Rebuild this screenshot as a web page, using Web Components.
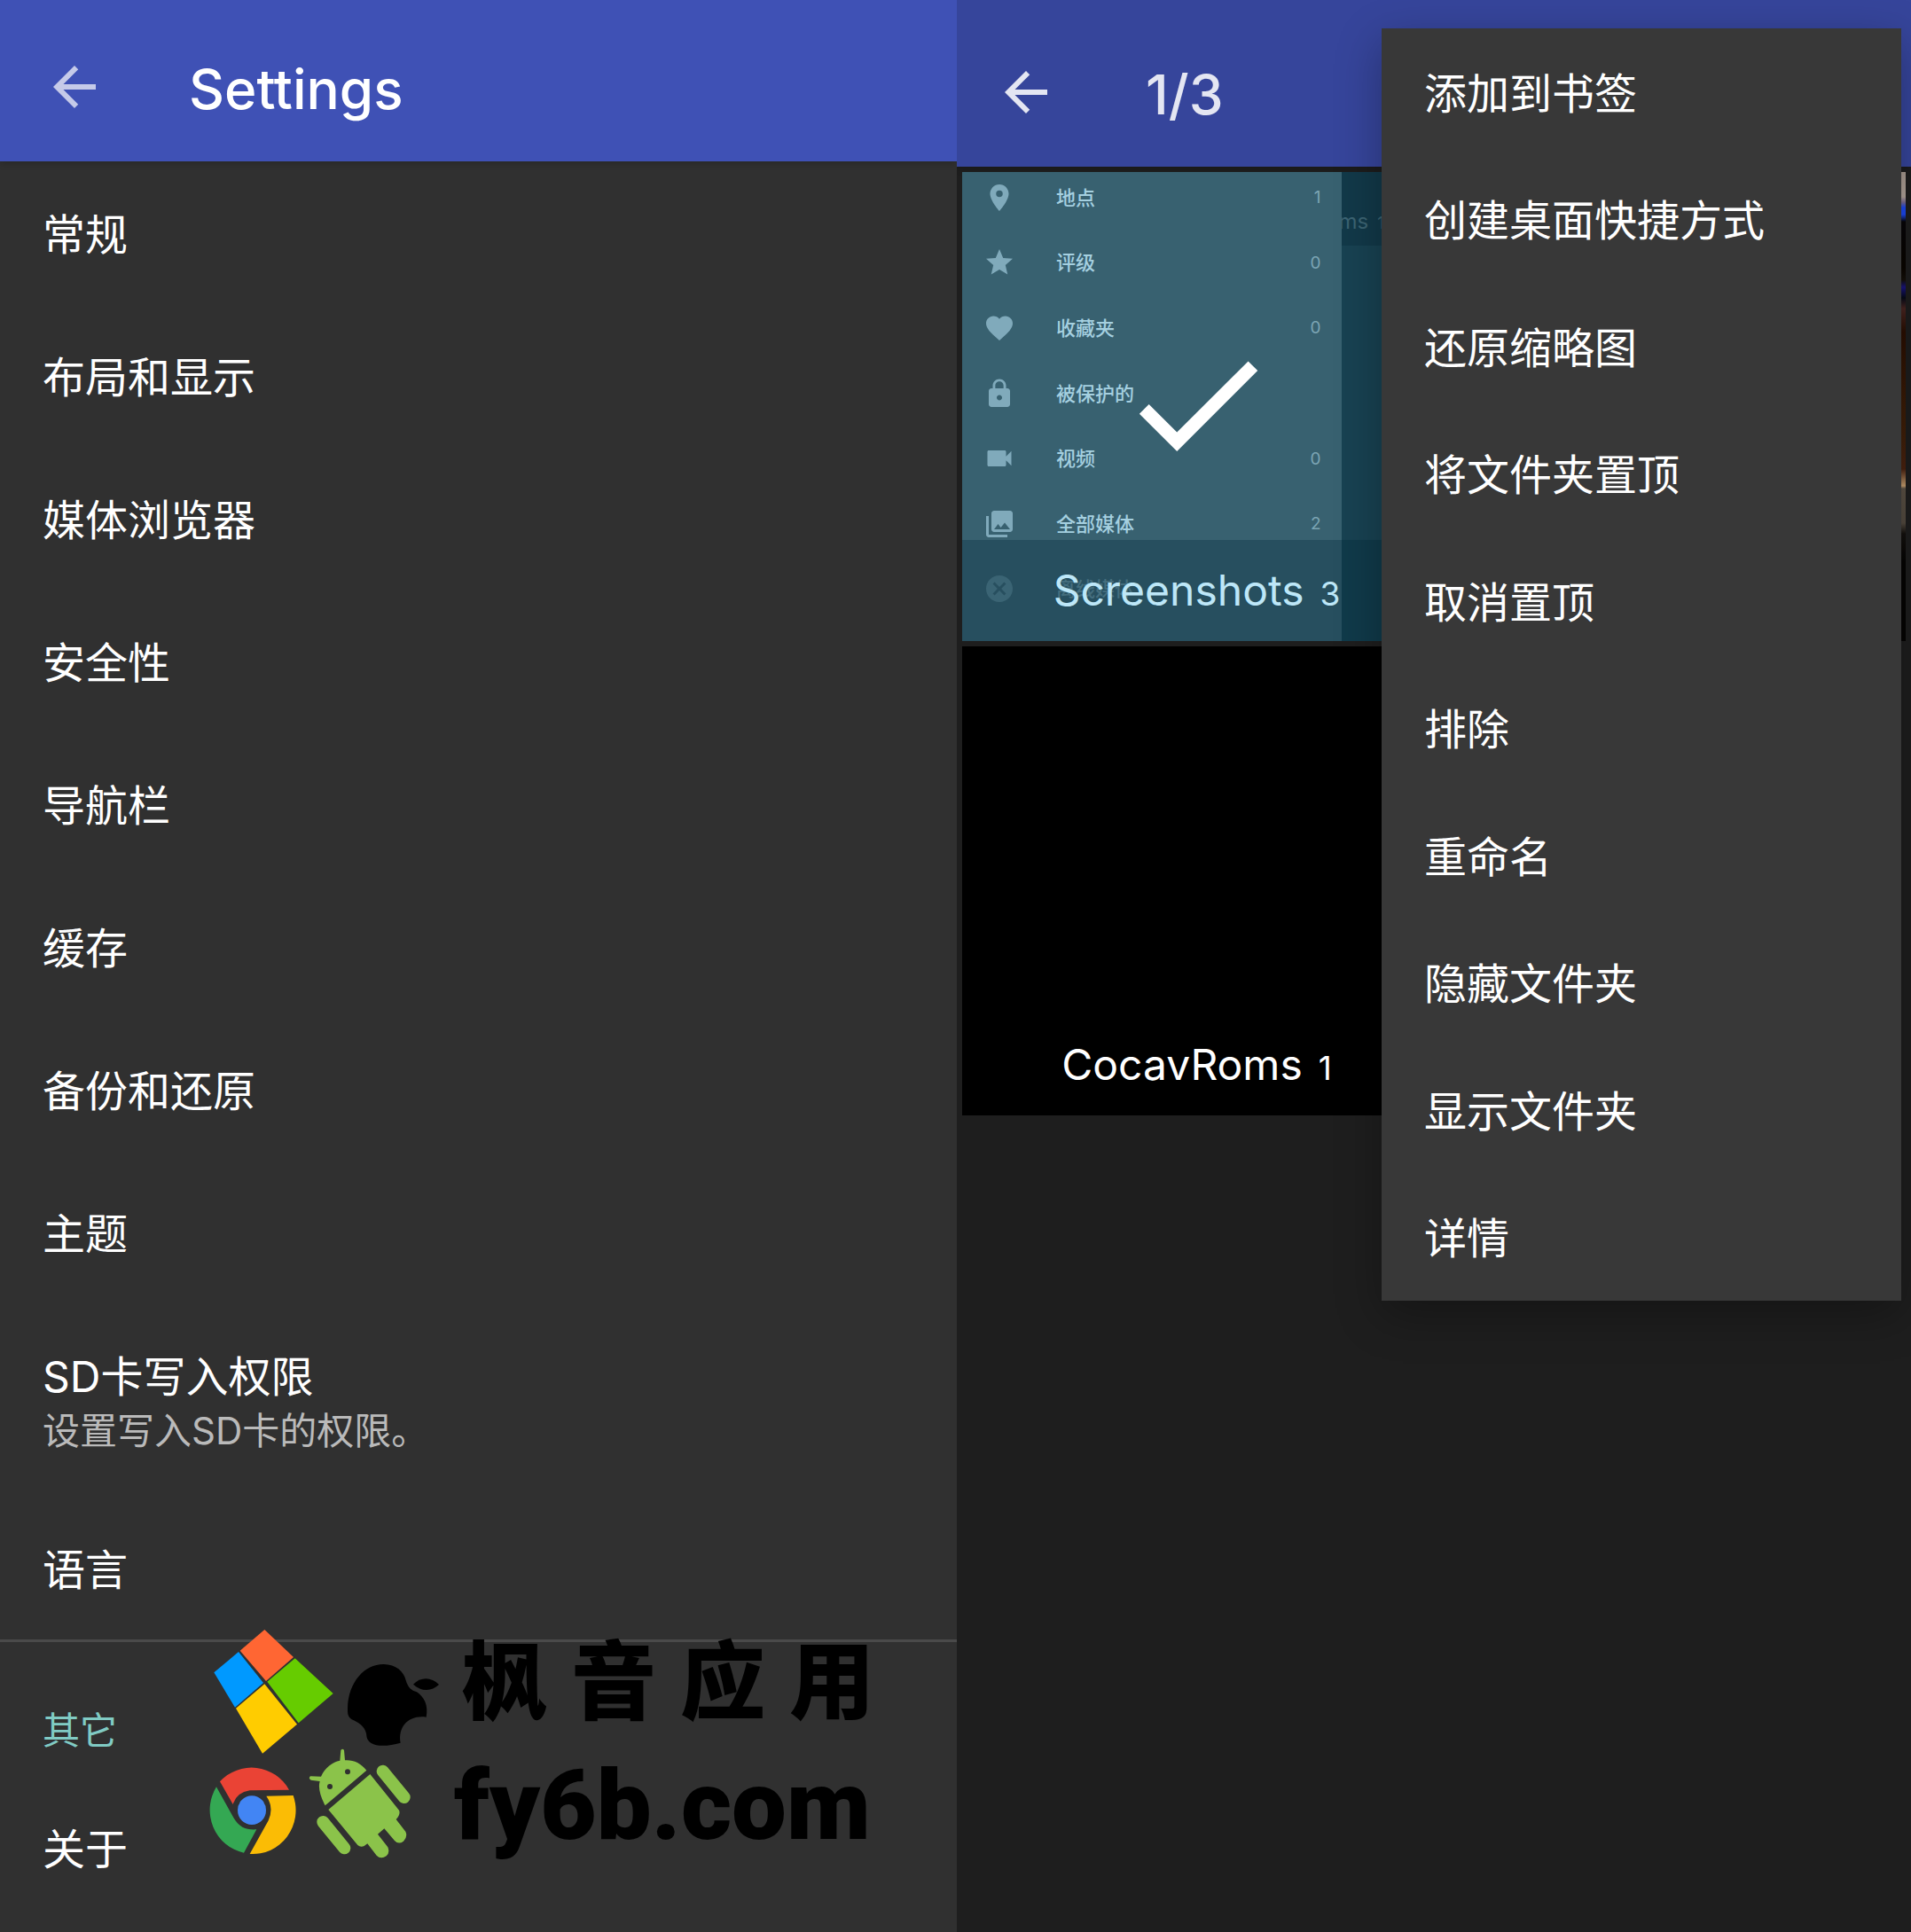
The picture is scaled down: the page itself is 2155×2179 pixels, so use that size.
<!DOCTYPE html>
<html lang="zh-CN">
<head>
<meta charset="utf-8">
<title>Settings</title>
<style>
    html, body {
        margin: 0;
        min-height: 100%;
    }
    body {
        display: flex;
        min-height: 100vh;
        background: #1e1e1e;
        color: #fff;
        font-family: Inter, "Noto Sans CJK SC", sans-serif;
        font-size: 48px;
    }
    settings-screen { flex: 1079 1 0; }
    gallery-screen { flex: 1076 1 0; }
</style>
</head>
<body>
<settings-screen>
    <app-bar slot="bar" label="Settings"></app-bar>
    <setting-row>常规</setting-row>
    <setting-row>布局和显示</setting-row>
    <setting-row>媒体浏览器</setting-row>
    <setting-row>安全性</setting-row>
    <setting-row>导航栏</setting-row>
    <setting-row>缓存</setting-row>
    <setting-row>备份和还原</setting-row>
    <setting-row>主题</setting-row>
    <setting-row>SD卡写入权限<span slot="summary">设置写入SD卡的权限。</span></setting-row>
    <setting-row>语言</setting-row>
    <setting-category>其它</setting-category>
    <setting-row>关于</setting-row>
    <brand-mark slot="mark"></brand-mark>
</settings-screen>

<gallery-screen>
    <app-bar slot="bar" class="selection" label="1/3"></app-bar>
    <folder-tile class="selected" name="Screenshots" count="3">
        <drawer-thumb></drawer-thumb>
    </folder-tile>
    <folder-tile class="photo"></folder-tile>
    <folder-tile name="CocavRoms" count="1"></folder-tile>
    <popup-menu slot="menu">
        <menu-entry>添加到书签</menu-entry>
        <menu-entry>创建桌面快捷方式</menu-entry>
        <menu-entry>还原缩略图</menu-entry>
        <menu-entry>将文件夹置顶</menu-entry>
        <menu-entry>取消置顶</menu-entry>
        <menu-entry>排除</menu-entry>
        <menu-entry>重命名</menu-entry>
        <menu-entry>隐藏文件夹</menu-entry>
        <menu-entry>显示文件夹</menu-entry>
        <menu-entry>详情</menu-entry>
    </popup-menu>
</gallery-screen>

<script>
// Small base: renders the markup once into an open shadow root
class BaseElement extends HTMLElement {
    constructor() {
        super();
        this.attachShadow({ mode: 'open' });
    }

    connectedCallback() {
        this.shadowRoot.innerHTML = this.template();
    }
}

class SettingsScreen extends BaseElement {
    template() {
        return `
            <style>
                :host {
                    display: block;
                    position: relative;
                    min-width: 0;
                    background: #303030;
                }
            </style>
            <slot name="bar"></slot>
            <main><slot></slot></main>
            <slot name="mark"></slot>
        `;
    }
}

class AppBar extends BaseElement {
    template() {
        return `
            <style>
                :host {
                    display: flex;
                    align-items: center;
                    gap: 93px;
                    box-sizing: border-box;
                    height: 182px;
                    padding: 14px 48px 0;
                    background: #3f51b5;
                    box-shadow: 0 2px 8px rgba(0, 0, 0, 0.2);
                }
                :host(.selection) {
                    height: 188px;
                    gap: 99px;
                    padding: 20px 42px 0;
                    background: #36459b;
                    color: #e4e6f2;
                }
                button {
                    display: flex;
                    padding: 0;
                    border: none;
                    background: none;
                    color: #c5cae9;
                    cursor: pointer;
                }
                :host(.selection) button { color: inherit; }
                svg {
                    width: 72px;
                    height: 72px;
                    fill: currentColor;
                }
                h1 {
                    margin: 0;
                    padding-top: 6px;
                    font-size: 62px;
                    font-weight: 500;
                    line-height: 72px;
                }
            </style>
            <button type="button" aria-label="Back">
                <svg viewBox="0 0 24 24"><path d="M20 11H7.83l5.59-5.59L12 4l-8 8 8 8 1.41-1.41L7.83 13H20v-2z"/></svg>
            </button>
            <h1>${this.getAttribute('label')}</h1>
        `;
    }
}

class SettingRow extends BaseElement {
    template() {
        return `
            <style>
                :host { display: block; }
                button {
                    display: block;
                    width: 100%;
                    padding: 50px 48px 46px;
                    border: none;
                    background: none;
                    color: inherit;
                    font: inherit;
                    line-height: 65px;
                    text-align: left;
                    cursor: pointer;
                }
                ::slotted([slot="summary"]) {
                    display: block;
                    color: #bababa;
                    font-size: 42px;
                    line-height: 57px;
                }
            </style>
            <button type="button"><slot></slot><slot name="summary"></slot></button>
        `;
    }
}

class SettingCategory extends BaseElement {
    template() {
        return `
            <style>
                :host {
                    display: block;
                    border-top: 3px solid #4a4a4a;
                    padding: 71px 48px 23px;
                }
                h2 {
                    margin: 0;
                    color: #80cbc4;
                    font-size: 42px;
                    font-weight: 400;
                    line-height: 57px;
                }
            </style>
            <h2><slot></slot></h2>
        `;
    }
}

class BrandMark extends BaseElement {
    template() {
        return `
            <style>
                :host {
                    position: absolute;
                    left: 220px;
                    bottom: 65px;
                    display: flex;
                    gap: 2px;
                    color: #000;
                }
                svg {
                    width: 290px;
                    height: 290px;
                }
                .words {
                    width: 474px;
                    font-weight: 900;
                }
                .cn {
                    margin-left: 9px;
                    font-family: "Noto Sans CJK SC", sans-serif;
                    font-size: 96px;
                    line-height: 140px;
                    text-align: justify;
                    text-align-last: justify;
                }
                .site {
                    font-family: Roboto, sans-serif;
                    font-size: 110px;
                    line-height: 154px;
                    white-space: nowrap;
                }
            </style>
            <svg viewBox="0 0 870 870" aria-hidden="true">
                <!-- windows -->
                <path fill="#ff6633" d="M235 54 333 147 240 228 152 125z"/>
                <path fill="#0099ff" d="M147 129 231 234 135 317 64 199z"/>
                <path fill="#66cc00" d="M338 151 467 270 350 370 244 230z"/>
                <path fill="#ffcc00" d="M235 238 345 374 228 473 138 320z"/>
                <!-- apple -->
                <path d="M638 171C680 172 705 195 713 225C720 250 732 260 750 265C775 282 790 310 782 350C725 342 685 380 695 437C655 449 615 450 596 438C580 427 581 418 579 405C573 380 553 368 530 358C516 346 516 340 516 320C518 230 575 170 638 171z"/>
                <path d="M738 239C762 213 800 213 825 240C800 264 765 264 738 239z"/>
                <!-- chrome -->
                <path fill="#ea4335" d="M84 568A146 148 0 0 1 318 596L185 598Q140 605 128 645z"/>
                <path fill="#34a853" d="M72 586L130 690C150 725 175 732 208 730L165 809A146 148 0 0 1 72 586z"/>
                <path fill="#fbbc05" d="M241 617L332 615A146 148 0 0 1 185 813L248 700Q268 655 241 617z"/>
                <ellipse fill="#4285f4" cx="192" cy="665" rx="48" ry="49"/>
                <!-- android -->
                <g fill="#8bc34a" stroke="#8bc34a">
                    <path stroke="none" d="M440 649C425 620 415 590 422 567L392 563Q382 556 390 550L426 551C440 520 465 502 490 497L493 462Q499 454 504 462L507 496C535 494 560 505 580 530z"/>
                    <path stroke="none" d="M451 663L592 543L690 665Q696 678 680 696L712 737Q720 755 705 770Q688 782 675 768L640 727L618 746L652 790Q660 808 647 820Q628 832 614 818L583 778L572 786Q560 792 550 783z"/>
                    <path stroke-width="42" stroke-linecap="round" d="M635 533L707 621M433 705L505 793"/>
                </g>
                <circle fill="#303030" cx="516" cy="535" r="9"/>
                <circle fill="#303030" cx="456" cy="585" r="9"/>
            </svg>
            <div class="words">
                <div class="cn">枫音应用</div>
                <div class="site">fy6b.com</div>
            </div>
        `;
    }
}

class GalleryScreen extends BaseElement {
    template() {
        return `
            <style>
                :host {
                    display: block;
                    position: relative;
                    min-width: 0;
                    overflow: hidden;
                }
                main {
                    display: grid;
                    grid-template-columns: 1fr 1fr;
                    gap: 6px;
                    padding: 6px;
                }
            </style>
            <slot name="bar"></slot>
            <main><slot></slot></main>
            <slot name="menu"></slot>
        `;
    }
}

class FolderTile extends BaseElement {
    template() {
        const name = this.getAttribute('name');
        const check = this.classList.contains('selected')
            ? '<svg viewBox="0 0 24 24"><path d="M9 16.17L4.83 12l-1.42 1.41L9 19 21 7l-1.41-1.41z"/></svg>'
            : '';
        const caption = name
            ? `<div class="caption"><span>${name}</span><small>${this.getAttribute('count')}</small></div>`
            : '';
        return `
            <style>
                :host {
                    display: grid;
                    position: relative;
                    aspect-ratio: 1;
                    overflow: hidden;
                    background: #000;
                }
                :host(.photo) {
                    background: linear-gradient(#a89a90 0, #b3a59b 28px, #7a6a90 34px, #1c48f0 40px,
                        #1c48f0 48px, #070508 56px, #0a0500 108px, #15100a 122px, #1a1480 130px,
                        #060a18 142px, #4a2622 154px, #2a0f02 180px, #3a1b06 260px, #40200a 300px,
                        #4a2210 335px, #c8a070 354px, #5c5246 357px, #544b40 396px, #14110e 408px, #050403 440px);
                }
                svg {
                    position: absolute;
                    inset: 0 0 6px;
                    margin: auto;
                    width: 182px;
                    height: 182px;
                    fill: #fff;
                }
                .caption {
                    position: absolute;
                    inset: auto 0 0;
                    display: flex;
                    justify-content: center;
                    align-items: baseline;
                    gap: 18px;
                    line-height: 114px;
                }
                :host(.selected) .caption {
                    background: rgba(0, 40, 55, 0.3);
                    color: #bde7f8;
                }
                small {
                    font-size: 37px;
                    line-height: 48px;
                }
            </style>
            <slot></slot>
            ${check}
            ${caption}
        `;
    }
}

const drawerIcons = {
    place: 'M12 2C8.13 2 5 5.13 5 9c0 5.25 7 13 7 13s7-7.75 7-13c0-3.87-3.13-7-7-7zm0 9.5a2.5 2.5 0 0 1 0-5 2.5 2.5 0 0 1 0 5z',
    star: 'M12 17.27L18.18 21l-1.64-7.03L22 9.24l-7.19-.61L12 2 9.19 8.63 2 9.24l5.46 4.73L5.82 21z',
    heart: 'M12 21.35l-1.45-1.32C5.4 15.36 2 12.28 2 8.5 2 5.42 4.42 3 7.5 3c1.74 0 3.41.81 4.5 2.09C13.09 3.81 14.76 3 16.5 3 19.58 3 22 5.42 22 8.5c0 3.78-3.4 6.86-8.55 11.54L12 21.35z',
    lock: 'M18 8h-1V6c0-2.76-2.24-5-5-5S7 3.24 7 6v2H6c-1.1 0-2 .9-2 2v10c0 1.1.9 2 2 2h12c1.1 0 2-.9 2-2V10c0-1.1-.9-2-2-2zm-6 9c-1.1 0-2-.9-2-2s.9-2 2-2 2 .9 2 2-.9 2-2 2zm3.1-9H8.9V6c0-1.71 1.39-3.1 3.1-3.1 1.71 0 3.1 1.39 3.1 3.1v2z',
    video: 'M17 10.5V7c0-.55-.45-1-1-1H4c-.55 0-1 .45-1 1v10c0 .55.45 1 1 1h12c.55 0 1-.45 1-1v-3.5l4 4v-11l-4 4z',
    photos: 'M22 16V4c0-1.1-.9-2-2-2H8c-1.1 0-2 .9-2 2v12c0 1.1.9 2 2 2h12c1.1 0 2-.9 2-2zm-11-4l2.03 2.71L16 11l4 5H8l3-4zM2 6v14c0 1.1.9 2 2 2h14v-2H4V6H2z',
    cancel: 'M12 2C6.47 2 2 6.47 2 12s4.47 10 10 10 10-4.47 10-10S17.53 2 12 2zm5 13.59L15.59 17 12 13.41 8.41 17 7 15.59 10.59 12 7 8.41 8.41 7 12 10.59 15.59 7 17 8.41 13.41 12 17 15.59z'
};

class DrawerThumb extends BaseElement {
    template() {
        const rows = [
            ['place', '地点', '1'],
            ['star', '评级', '0'],
            ['heart', '收藏夹', '0'],
            ['lock', '被保护的', ''],
            ['video', '视频', '0'],
            ['photos', '全部媒体', '2'],
            ['cancel', '离线媒体', '']
        ];
        return `
            <style>
                :host {
                    display: grid;
                    grid-template-columns: 81fr 19fr;
                    min-height: 0;
                    background: #184252;
                }
                ul {
                    display: flex;
                    flex-direction: column;
                    margin: -8px 0 0;
                    padding: 0 24px 22px;
                    list-style: none;
                    background: #386170;
                    color: #a5d0e0;
                    font-size: 22px;
                    font-weight: 500;
                }
                li {
                    flex: 1;
                    display: grid;
                    grid-template-columns: 82px 1fr auto;
                    align-items: center;
                }
                li:last-child { opacity: 0.4; }
                svg {
                    width: 36px;
                    height: 36px;
                    fill: #80aabb;
                }
                span { padding-bottom: 4px; }
                small {
                    color: #7ca5b4;
                    font-size: 19px;
                    font-weight: 400;
                }
                .behind {
                    align-self: start;
                    height: 83px;
                    overflow: hidden;
                    background: #123949;
                    color: #3c6473;
                    font-size: 24px;
                    line-height: 112px;
                    text-indent: -4px;
                    white-space: nowrap;
                }
                .behind small {
                    margin-left: 10px;
                    color: inherit;
                }
            </style>
            <ul>
                ${rows.map(([icon, label, count]) => `
                    <li>
                        <svg viewBox="0 0 24 24"><path d="${drawerIcons[icon]}"/></svg>
                        <span>${label}</span>
                        <small>${count}</small>
                    </li>
                `).join('')}
            </ul>
            <div class="behind">ms<small>1</small></div>
        `;
    }
}

class PopupMenu extends BaseElement {
    template() {
        return `
            <style>
                :host {
                    position: absolute;
                    top: 32px;
                    right: 11px;
                    display: flex;
                    flex-direction: column;
                    width: 586px;
                    max-height: 1435px;
                    background: #383838;
                    box-shadow: 0 16px 48px rgba(0, 0, 0, 0.3);
                }
            </style>
            <slot></slot>
        `;
    }
}

class MenuEntry extends BaseElement {
    template() {
        return `
            <style>
                :host {
                    display: flex;
                    flex: 0 1 144px;
                    min-height: 0;
                }
                button {
                    flex: 1;
                    padding: 0 48px 4px;
                    border: none;
                    background: none;
                    color: inherit;
                    font: inherit;
                    text-align: left;
                    cursor: pointer;
                }
            </style>
            <button type="button"><slot></slot></button>
        `;
    }
}

customElements.define('settings-screen', SettingsScreen);
customElements.define('app-bar', AppBar);
customElements.define('setting-row', SettingRow);
customElements.define('setting-category', SettingCategory);
customElements.define('brand-mark', BrandMark);
customElements.define('gallery-screen', GalleryScreen);
customElements.define('folder-tile', FolderTile);
customElements.define('drawer-thumb', DrawerThumb);
customElements.define('popup-menu', PopupMenu);
customElements.define('menu-entry', MenuEntry);
</script>
</body>
</html>
